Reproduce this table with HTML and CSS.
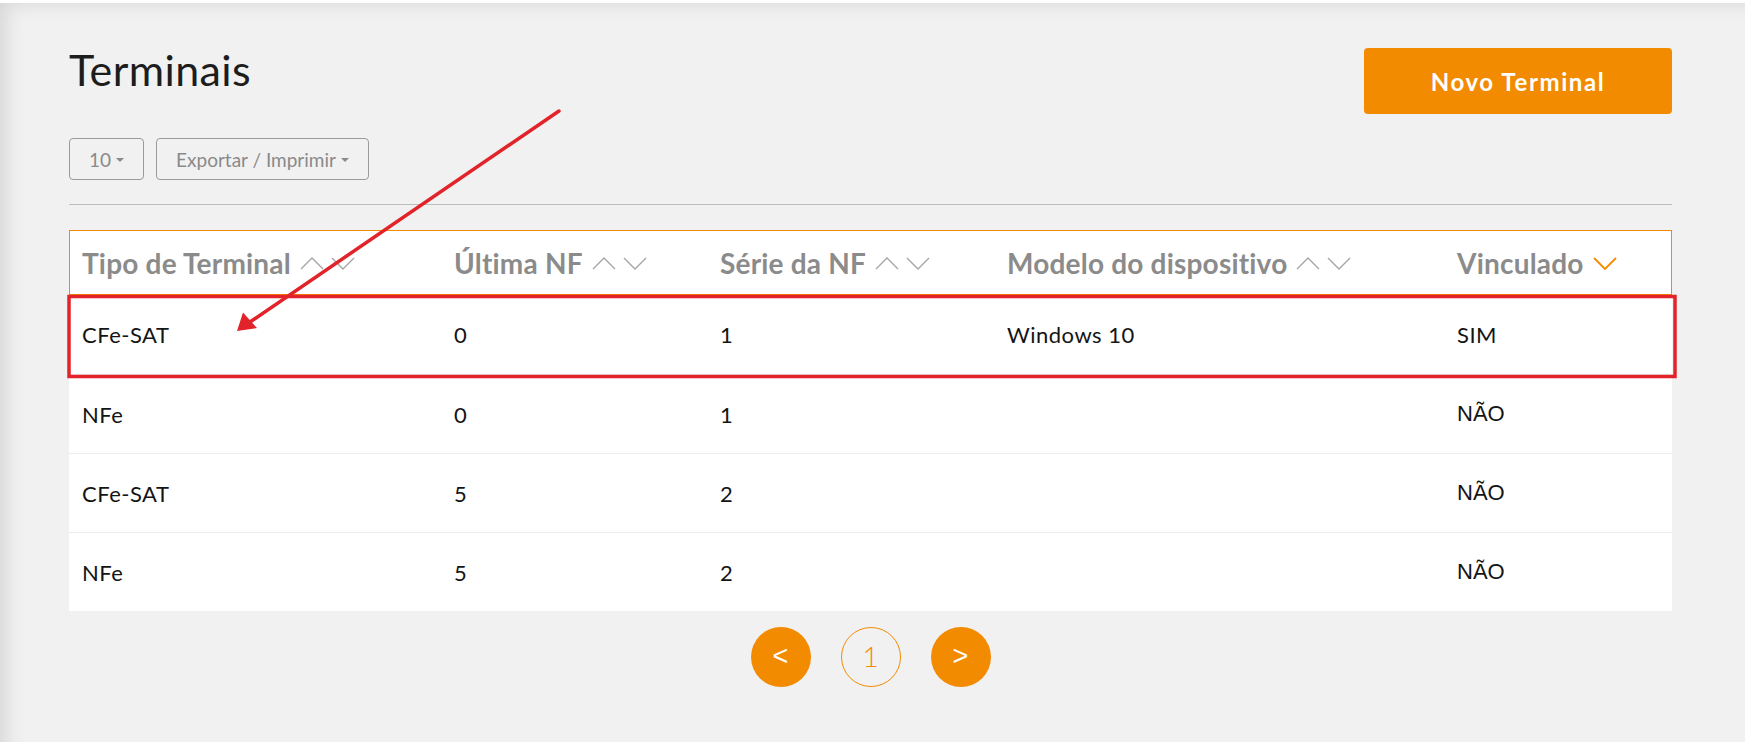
FILE: index.html
```html
<!DOCTYPE html>
<html lang="pt-BR">
<head>
<meta charset="utf-8">
<title>Terminais</title>
<link rel="stylesheet" href="styles.css">
</head>
<body>
<main class="page">
  <header class="top">
    <h1 class="title">Terminais</h1>
    <button class="btn-primary">Novo Terminal</button>
  </header>

  <div class="toolbar">
    <button class="btn-outline">10<span class="caret"></span></button>
    <button class="btn-outline">Exportar / Imprimir<span class="caret"></span></button>
  </div>

  <hr class="divider">

  <div class="table">
    <div class="row thead">
      <div class="cell">Tipo de Terminal<span class="sort"><svg class="chev" viewBox="0 0 24 13"><polyline points="1,12 12,1 23,12"/></svg><svg class="chev" viewBox="0 0 24 13"><polyline points="1,1 12,12 23,1"/></svg></span></div>
      <div class="cell">Última NF<span class="sort"><svg class="chev" viewBox="0 0 24 13"><polyline points="1,12 12,1 23,12"/></svg><svg class="chev" viewBox="0 0 24 13"><polyline points="1,1 12,12 23,1"/></svg></span></div>
      <div class="cell">Série da NF<span class="sort"><svg class="chev" viewBox="0 0 24 13"><polyline points="1,12 12,1 23,12"/></svg><svg class="chev" viewBox="0 0 24 13"><polyline points="1,1 12,12 23,1"/></svg></span></div>
      <div class="cell">Modelo do dispositivo<span class="sort"><svg class="chev" viewBox="0 0 24 13"><polyline points="1,12 12,1 23,12"/></svg><svg class="chev" viewBox="0 0 24 13"><polyline points="1,1 12,12 23,1"/></svg></span></div>
      <div class="cell">Vinculado<span class="sort"><svg class="chev active" viewBox="0 0 24 13"><polyline points="1,1 12,12 23,1"/></svg></span></div>
    </div>
    <div class="row">
      <div class="cell">CFe-SAT</div>
      <div class="cell">0</div>
      <div class="cell">1</div>
      <div class="cell">Windows 10</div>
      <div class="cell">SIM</div>
    </div>
    <div class="row">
      <div class="cell">NFe</div>
      <div class="cell">0</div>
      <div class="cell">1</div>
      <div class="cell"></div>
      <div class="cell alt">NÃO</div>
    </div>
    <div class="row">
      <div class="cell">CFe-SAT</div>
      <div class="cell">5</div>
      <div class="cell">2</div>
      <div class="cell"></div>
      <div class="cell alt">NÃO</div>
    </div>
    <div class="row">
      <div class="cell">NFe</div>
      <div class="cell">5</div>
      <div class="cell">2</div>
      <div class="cell"></div>
      <div class="cell alt">NÃO</div>
    </div>
  </div>

  <nav class="pager">
    <button class="page-btn filled">&lt;</button>
    <button class="page-btn current">1</button>
    <button class="page-btn filled">&gt;</button>
  </nav>
</main>

<svg class="annotation" width="1745" height="742" viewBox="0 0 1745 742">
  <rect x="69" y="296.5" width="1606" height="80" fill="none" stroke="#e3232a" stroke-width="3.5"/>
  <line x1="559" y1="111" x2="250" y2="322" stroke="#e3232a" stroke-width="3.5" stroke-linecap="round"/>
  <polygon points="237,331 243,312.5 257,328" fill="#e3232a"/>
</svg>
</body>
</html>
```

FILE: styles.css
```css
* { box-sizing: border-box; }

html, body {
  margin: 0;
  padding: 0;
  background: #ffffff;
}

body {
  position: relative;
  width: 1745px;
  height: 742px;
  overflow: hidden;
  font-family: Lato, "Liberation Sans", sans-serif;
}

.page {
  margin-top: 3px;
  height: 739px;
  background: #f1f1f1;
  padding: 42px 73px 0 69px;
  box-shadow: inset 16px 10px 22px -12px rgba(0, 0, 0, 0.13);
}

.top {
  display: flex;
  justify-content: space-between;
  align-items: flex-start;
}

.title {
  margin: 0;
  font-size: 43px;
  line-height: 50px;
  font-weight: 400;
  letter-spacing: 0.4px;
  color: #1d1d1d;
}

.btn-primary {
  margin-top: 3px;
  width: 308px;
  height: 66px;
  border: none;
  border-radius: 4px;
  background: #f38b00;
  color: #ffffff;
  font-family: Lato, sans-serif;
  font-weight: 700;
  font-size: 24px;
  letter-spacing: 1.6px;
  cursor: pointer;
}

.toolbar {
  margin-top: 24px;
  display: flex;
  gap: 12px;
}

.btn-outline {
  height: 42px;
  padding: 0 19px 0 19px;
  border: 1px solid #9a9a9a;
  border-radius: 4px;
  background: transparent;
  color: #8a8a8a;
  font-family: Lato, sans-serif;
  font-size: 19px;
  display: flex;
  align-items: center;
}

.caret {
  display: inline-block;
  margin-left: 5px;
  margin-top: 2px;
  width: 0;
  height: 0;
  border-left: 4.5px solid transparent;
  border-right: 4.5px solid transparent;
  border-top: 4.5px solid #8a8a8a;
}

.divider {
  margin: 24px 0 0 0;
  border: none;
  border-top: 1px solid #bdbdbd;
  height: 0;
}

.table {
  margin-top: 25px;
  background: #ffffff;
}

.row {
  display: grid;
  grid-template-columns: 372px 266px 287px 450px 228px;
  height: 79px;
  align-items: center;
  border-top: 1px solid #ececec;
}

.row:nth-child(2) {
  border-top: none;
}

.cell {
  padding-left: 13px;
  font-size: 22px;
  letter-spacing: 0.5px;
  color: #141414;
  white-space: nowrap;
  display: flex;
  align-items: center;
}

.cell.alt {
  font-family: "Liberation Sans", Arial, sans-serif;
  font-size: 22px;
  letter-spacing: 0;
}

.thead {
  height: 65px;
  border-top: none;
  box-shadow: inset 0 0 0 1px #f38b00;
}

.thead .cell {
  font-size: 28px;
  font-weight: 700;
  letter-spacing: 0.2px;
  color: #8b8b8b;
  padding-top: 1px;
}

.sort {
  display: inline-flex;
  align-items: center;
  gap: 7px;
  margin-left: 9px;
}

.chev {
  width: 24px;
  height: 13px;
  fill: none;
  stroke: #a5a5a5;
  stroke-width: 1.4;
}

.chev.active {
  stroke: #f38b00;
  stroke-width: 1.8;
}

.pager {
  margin-top: 16px;
  display: flex;
  justify-content: center;
  gap: 30px;
}

.page-btn {
  width: 60px;
  height: 60px;
  border-radius: 50%;
  font-family: "Liberation Sans", Arial, sans-serif;
  font-size: 27px;
  font-weight: 400;
  display: flex;
  align-items: center;
  justify-content: center;
  padding: 0 0 1px 0;
}

.page-btn.filled {
  background: #f38b00;
  border: none;
  color: #ffffff;
}

.page-btn.current {
  background: transparent;
  border: 1px solid #f38b00;
  color: #f38b00;
  font-family: Lato, sans-serif;
  font-weight: 300;
  font-size: 28px;
  padding-bottom: 2px;
}

.annotation {
  position: absolute;
  top: 0;
  left: 0;
  pointer-events: none;
}
```
